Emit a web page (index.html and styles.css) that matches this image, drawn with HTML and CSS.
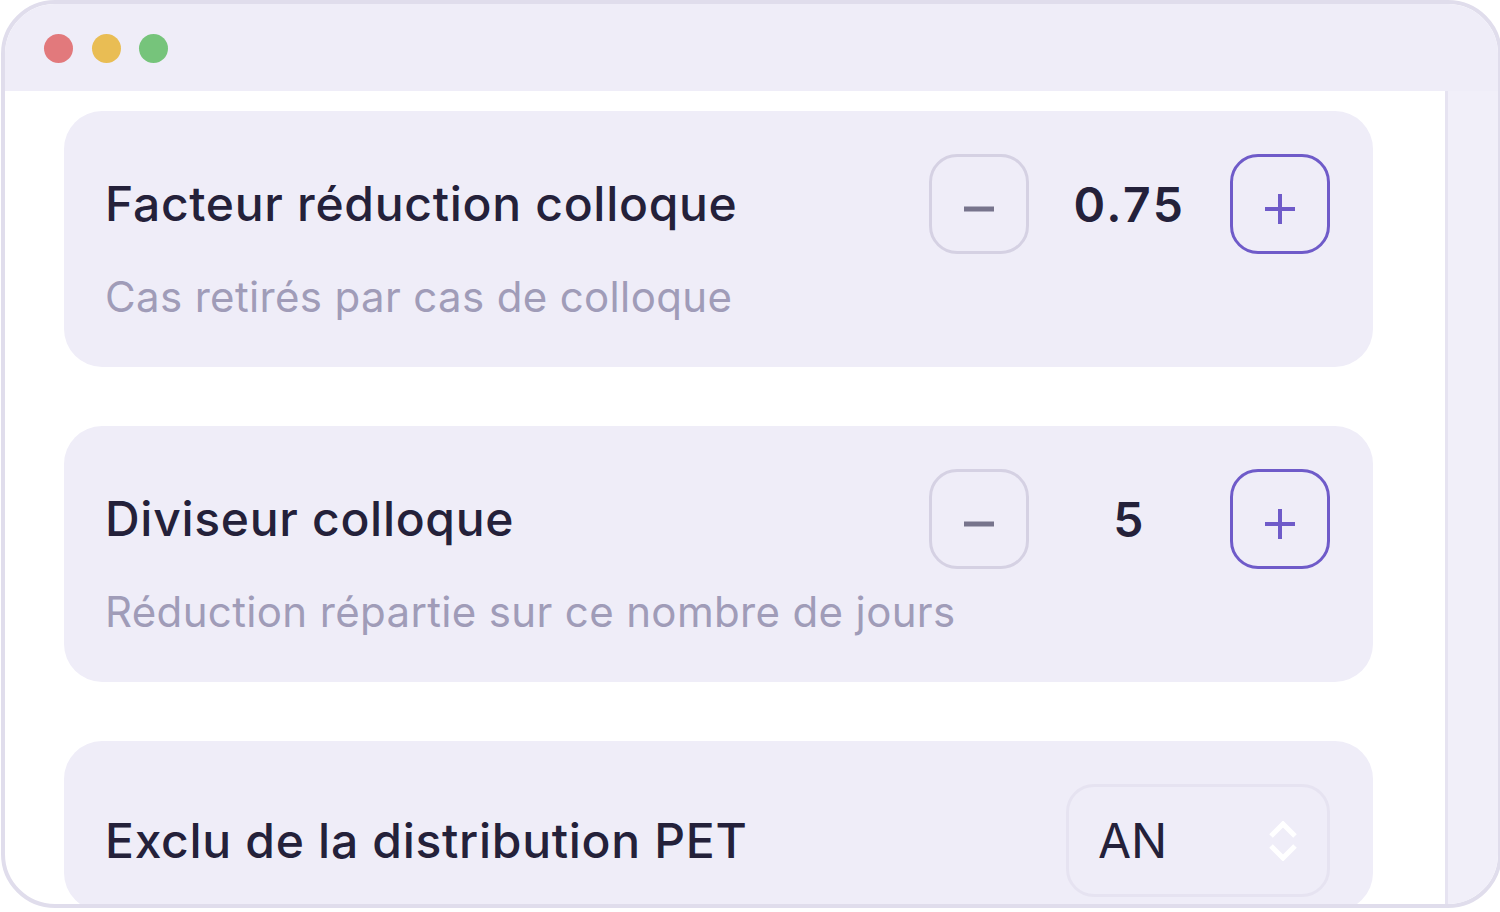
FILE: index.html
```html
<!DOCTYPE html>
<html lang="fr">
<head>
    <meta charset="UTF-8">
    <title>Réglages</title>
    <link rel="stylesheet" href="styles.css">
</head>
<body>
    <div class="window">
        <div class="titlebar">
            <span class="dot dot-red"></span>
            <span class="dot dot-yellow"></span>
            <span class="dot dot-green"></span>
        </div>
        <div class="content">
            <div class="main">
                <div class="card">
                    <div class="card-row">
                        <span class="card-title">Facteur réduction colloque</span>
                        <div class="stepper">
                            <button class="step step-minus"><svg viewBox="0 0 30 30" width="30" height="30"><path d="M0 15H30" /></svg></button>
                            <span class="step-value">0.75</span>
                            <button class="step step-plus"><svg viewBox="0 0 30 30" width="30" height="30"><path d="M0 15H30M15 0V30" /></svg></button>
                        </div>
                    </div>
                    <p class="card-sub">Cas retirés par cas de colloque</p>
                </div>
                <div class="card">
                    <div class="card-row">
                        <span class="card-title">Diviseur colloque</span>
                        <div class="stepper">
                            <button class="step step-minus"><svg viewBox="0 0 30 30" width="30" height="30"><path d="M0 15H30" /></svg></button>
                            <span class="step-value">5</span>
                            <button class="step step-plus"><svg viewBox="0 0 30 30" width="30" height="30"><path d="M0 15H30M15 0V30" /></svg></button>
                        </div>
                    </div>
                    <p class="card-sub">Réduction répartie sur ce nombre de jours</p>
                </div>
                <div class="card card-select">
                    <div class="card-row">
                        <span class="card-title">Exclu de la distribution PET</span>
                        <div class="select">
                            <span>AN</span>
                            <svg viewBox="0 0 30 40" width="30" height="40"><path d="M3 15L15 3L27 15M3 25L15 37L27 25" /></svg>
                        </div>
                    </div>
                </div>
            </div>
            <div class="side"></div>
        </div>
    </div>
</body>
</html>
```

FILE: styles.css
```css
* {
    box-sizing: border-box;
}
html, body {
    height: 100%;
}
body {
    margin: 0;
    background: #fff;
    font-family: Inter, "Liberation Sans", sans-serif;
    overflow: hidden;
}
.window {
    height: 908px;
    margin: 0 -2px 0 1px;
    border: 4px solid #e0ddec;
    border-radius: 54px;
    background: #fff;
    overflow: hidden;
    display: flex;
    flex-direction: column;
}
.titlebar {
    height: 87px;
    flex: none;
    background: #efedf8;
    display: flex;
    align-items: center;
    gap: 18.5px;
    padding: 2px 0 0 39px;
}
.dot {
    width: 29px;
    height: 29px;
    border-radius: 50%;
}
.dot-red {
    background: #e2797c;
}
.dot-yellow {
    background: #e9bd54;
}
.dot-green {
    background: #76c47b;
}
.content {
    flex: 1;
    min-height: 0;
    display: flex;
}
.main {
    flex: 1;
    padding: 20px 72px 0 59px;
    display: flex;
    flex-direction: column;
    gap: 59px;
}
.side {
    width: 53px;
    flex: none;
    background: #f1eff9;
    border-left: 3px solid #e6e3f1;
}
.card {
    background: #efedf8;
    border-radius: 38px;
    padding: 43px 43px 43px 41px;
    height: 256px;
    flex: none;
}
.card-select {
    height: 170px;
}
.card-row {
    display: flex;
    align-items: center;
    justify-content: space-between;
}
.card-title {
    margin-bottom: 1px;
    font-size: 48px;
    font-weight: 500;
    letter-spacing: 0.7px;
    color: #24213a;
}
.card-sub {
    margin: 17px 0 0;
    font-size: 42px;
    line-height: 52px;
    letter-spacing: 0.35px;
    color: #a09cb8;
}
.stepper {
    display: flex;
    align-items: center;
}
.step {
    width: 100px;
    height: 100px;
    padding: 10px 0 0;
    background: transparent;
    border: 3.5px solid #d5d1e3;
    border-radius: 28px;
    display: flex;
    align-items: center;
    justify-content: center;
}
.step svg {
    fill: none;
    stroke-width: 4;
}
.step-minus svg {
    stroke: #77748c;
    stroke-width: 5;
}
.step-plus {
    border-color: #6f5bc9;
}
.step-plus svg {
    stroke: #6f5bc9;
}
.step-value {
    width: 201px;
    text-align: center;
    font-size: 48px;
    font-weight: 600;
    letter-spacing: 2.5px;
    color: #24213a;
}
.select {
    width: 264px;
    height: 113px;
    padding: 0 29px 0 29px;
    border: 3px solid #e6e3f1;
    border-radius: 28px;
    display: flex;
    align-items: center;
    justify-content: space-between;
    font-size: 48px;
    color: #24213a;
}
.select svg {
    fill: none;
    stroke: #fff;
    stroke-width: 5;
}
```
